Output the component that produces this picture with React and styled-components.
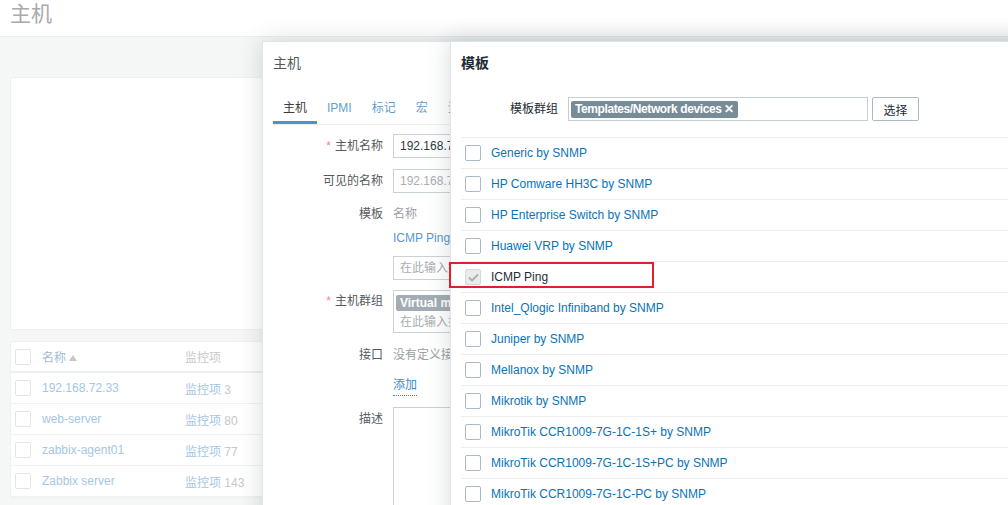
import React from 'react';
import styled, { createGlobalStyle } from 'styled-components';

const font = `"Liberation Sans", Arial, "Noto Sans CJK SC", sans-serif`;

const Global = createGlobalStyle`
  body {
    margin: 0;
    font-family: ${font};
    font-size: 12px;
  }
  * { box-sizing: border-box; }
`

const Page = styled.div`
  position: relative;
  height: 505px;
  overflow: hidden;
  background: #f5f6f6;
`
const TopBar = styled.header`
  height: 37px;
  padding: 2px 10px 0;
  background: #fff;
  border-bottom: 1px solid #eceeef;
`
const PageTitle = styled.h1`
  margin: 0;
  font-size: 21px;
  line-height: 24px;
  font-weight: normal;
  color: #a9a9a9;
`
const Content = styled.main`
  padding: 40px 10px 0;
`
const FilterPanel = styled.div`
  height: 253px;
  margin-bottom: 11px;
  background: #fff;
  border: 1px solid #eef0f1;
`
const HostTable = styled.div`
  background: #fff;
  border: 1px solid #eef0f1;
`
const TableRow = styled.div`
  display: grid;
  grid-template-columns: 31px 143px 1fr;
  align-items: center;
  height: 31px;
  border-bottom: ${p => (p.$head ? '2px solid #eceff0' : '1px solid #f0f2f3')};
  color: ${p => (p.$head ? '#c9c9c9' : '#c3c9cd')};
`
const FadedBox = styled.span`
  display: block;
  width: 16px;
  height: 16px;
  margin-left: 4px;
  border: 1px solid #dfe5e8;
  border-radius: 2px;
`
const FadedLink = styled.span`
  color: ${p => (p.$head ? '#a2bdd5' : '#a4c7e5')};
`
const SortArrow = styled.span`
  display: inline-block;
  margin-left: 3px;
  border-left: 4px solid transparent;
  border-right: 4px solid transparent;
  border-bottom: 6px solid #c4c8ca;
  vertical-align: 1px;
`

const Dialog = styled.section`
  position: absolute;
  top: 41px;
  left: ${p => p.$left}px;
  width: 760px;
  height: 520px;
  padding: 0 10px;
  background: #fff;
  border: 1px solid #dfe4e7;
  box-shadow: 0 0 22px rgba(40, 60, 70, 0.18);
`
const DialogTitle = styled.h4`
  margin: 0;
  line-height: 42px;
  font-size: 14px;
  font-weight: ${p => (p.$muted ? 'normal' : 'bold')};
  color: ${p => (p.$muted ? '#56595b' : '#1f2c33')};
`
const Tabs = styled.nav`
  display: flex;
  border-bottom: 1px solid #ebeeef;
`
const Tab = styled.span`
  padding: 17px 10px 6px;
  line-height: 14px;
  border-bottom: 3px solid ${p => (p.$active ? '#4796c4' : 'transparent')};
  color: ${p => (p.$active ? '#3c3c3c' : '#5e9fcf')};
  white-space: nowrap;
`
const HostForm = styled.div`
  padding-top: 9px;
`
const FormRow = styled.div`
  display: grid;
  grid-template-columns: ${p => p.$label || 110}px 1fr;
  column-gap: 10px;
  margin-top: ${p => (p.$gap === undefined ? 11 : p.$gap)}px;
  &:first-child { margin-top: 0; }
`
const Label = styled.label`
  text-align: right;
  line-height: ${p => p.$lh || 24}px;
  color: ${p => p.$color || '#555a5d'};
  white-space: nowrap;
`
const Required = styled.span`
  color: #ee8c8a;
  margin-right: 4px;
`
const TextInput = styled.div`
  width: 460px;
  height: 24px;
  padding: 0 6px;
  line-height: 22px;
  border: 1px solid #cbd2d6;
  color: ${p => (p.$placeholder ? '#a9adb0' : '#2f3a40')};
  white-space: nowrap;
`
const Muted = styled.div`
  line-height: ${p => p.$lh || 20}px;
  color: #9a9fa2;
  white-space: nowrap;
`
const LinkText = styled.div`
  line-height: ${p => p.$lh || 28}px;
  color: #5c97c9;
  margin-bottom: ${p => p.$mb || 0}px;
`
const AddLink = styled.span`
  display: inline-block;
  line-height: 20px;
  color: #3e89c8;
  border-bottom: 1px dotted #3e89c8;
`
const GroupBox = styled.div`
  width: 460px;
  height: 43px;
  padding: 4px 2px 0;
  border: 1px solid #cbd2d6;
`
const GreyTag = styled.span`
  display: inline-block;
  height: 16px;
  padding: 0 4px;
  line-height: 16px;
  font-weight: bold;
  color: #fff;
  background: #a2acb2;
  border-radius: 2px;
`
const Placeholder = styled.div`
  padding-left: 4px;
  line-height: 22px;
  color: #a9adb0;
`
const TextArea = styled.div`
  width: 460px;
  height: 120px;
  border: 1px solid #cbd2d6;
`

const TemplateFilter = styled(FormRow)`
  margin-top: 13px;
`
const GroupInput = styled.div`
  display: flex;
  align-items: center;
  width: 300px;
  height: 24px;
  padding: 0 2px;
  border: 1px solid #c6ced2;
`
const DarkTag = styled.span`
  height: 17px;
  padding: 0 4px;
  line-height: 17px;
  font-weight: bold;
  color: #fff;
  background: #768d99;
  border-radius: 2px;
  white-space: nowrap;
  letter-spacing: -0.4px;
`
const SelectButton = styled.button`
  width: 47px;
  height: 24px;
  margin-left: 4px;
  padding: 0;
  font: inherit;
  color: #1f2c33;
  background: #fff;
  border: 1px solid #acbbc2;
  border-radius: 2px;
`
const Field = styled.div`
  display: flex;
`
const TemplateList = styled.ul`
  margin: 16px 0 0;
  padding: 0;
  list-style: none;
  border-top: 1px solid #ebeeef;
`
const TemplateItem = styled.li`
  position: relative;
  display: flex;
  align-items: center;
  gap: 10px;
  height: 31px;
  padding-left: 4px;
  border-bottom: 1px solid #ebeeef;
  color: ${p => (p.$disabled ? '#1f2c33' : '#0a73b7')};
  white-space: nowrap;
`
const CheckBox = styled.span`
  display: flex;
  align-items: center;
  justify-content: center;
  width: 16px;
  height: 16px;
  border: 1px solid ${p => (p.$disabled ? '#d3d8db' : '#acbbc2')};
  border-radius: 2px;
  background: ${p => (p.$disabled ? '#ebebeb' : '#fff')};
`
const Highlight = styled.span`
  position: absolute;
  left: -12px;
  top: 0;
  width: 205px;
  height: 26px;
  border: 2px solid #e3202a;
`

const hosts = [
  { name: '192.168.72.33', items: 3 },
  { name: 'web-server', items: 80 },
  { name: 'zabbix-agent01', items: 77 },
  { name: 'Zabbix server', items: 143 },
]

const templates = [
  'Generic by SNMP',
  'HP Comware HH3C by SNMP',
  'HP Enterprise Switch by SNMP',
  'Huawei VRP by SNMP',
  'ICMP Ping',
  'Intel_Qlogic Infiniband by SNMP',
  'Juniper by SNMP',
  'Mellanox by SNMP',
  'Mikrotik by SNMP',
  'MikroTik CCR1009-7G-1C-1S+ by SNMP',
  'MikroTik CCR1009-7G-1C-1S+PC by SNMP',
  'MikroTik CCR1009-7G-1C-PC by SNMP',
]

const Check = () => (
  <svg width="11" height="9" viewBox="0 0 11 9">
    <path d="M1 4.5 L4 7.5 L10 1.5" fill="none" stroke="#a9aeb1" strokeWidth="1.8" />
  </svg>
)

const App = () => (
  <Page>
    <Global />
    <TopBar>
      <PageTitle>主机</PageTitle>
    </TopBar>
    <Content>
      <FilterPanel />
      <HostTable>
        <TableRow $head>
          <FadedBox />
          <FadedLink $head>名称<SortArrow /></FadedLink>
          <span>监控项</span>
        </TableRow>
        {hosts.map(h => (
          <TableRow key={h.name}>
            <FadedBox />
            <FadedLink>{h.name}</FadedLink>
            <span><FadedLink>监控项</FadedLink> {h.items}</span>
          </TableRow>
        ))}
      </HostTable>
    </Content>

    <Dialog $left={262}>
      <DialogTitle $muted>主机</DialogTitle>
      <Tabs>
        <Tab $active>主机</Tab>
        <Tab>IPMI</Tab>
        <Tab>标记</Tab>
        <Tab>宏</Tab>
        <Tab>资产记录</Tab>
        <Tab>加密</Tab>
      </Tabs>
      <HostForm>
        <FormRow>
          <Label><Required>*</Required>主机名称</Label>
          <TextInput>192.168.72.33</TextInput>
        </FormRow>
        <FormRow>
          <Label>可见的名称</Label>
          <TextInput $placeholder>192.168.72.33</TextInput>
        </FormRow>
        <FormRow>
          <Label $lh={20}>模板</Label>
          <div>
            <Muted>名称</Muted>
            <LinkText $mb={4}>ICMP Ping</LinkText>
            <TextInput $placeholder>在此输入搜索</TextInput>
          </div>
        </FormRow>
        <FormRow $gap={10}>
          <Label $lh={22}><Required>*</Required>主机群组</Label>
          <GroupBox>
            <GreyTag>Virtual machines</GreyTag>
            <Placeholder>在此输入搜索</Placeholder>
          </GroupBox>
        </FormRow>
        <FormRow>
          <Label $lh={22}>接口</Label>
          <Muted $lh={22}>没有定义接口。</Muted>
        </FormRow>
        <FormRow $gap={9}>
          <Label $lh={22} />
          <div><AddLink>添加</AddLink></div>
        </FormRow>
        <FormRow>
          <Label>描述</Label>
          <TextArea />
        </FormRow>
      </HostForm>
    </Dialog>

    <Dialog $left={450}>
      <DialogTitle>模板</DialogTitle>
      <TemplateFilter $label={97}>
        <Label $color="#1f2c33">模板群组</Label>
        <Field>
          <GroupInput>
            <DarkTag>Templates/Network devices ✕</DarkTag>
          </GroupInput>
          <SelectButton>选择</SelectButton>
        </Field>
      </TemplateFilter>
      <TemplateList>
        {templates.map((t, i) => {
          const disabled = t === 'ICMP Ping'
          return (
            <TemplateItem key={i} $disabled={disabled}>
              <CheckBox $disabled={disabled}>{disabled && <Check />}</CheckBox>
              {t}
              {disabled && <Highlight />}
            </TemplateItem>
          )
        })}
      </TemplateList>
    </Dialog>
  </Page>
)

export default App
